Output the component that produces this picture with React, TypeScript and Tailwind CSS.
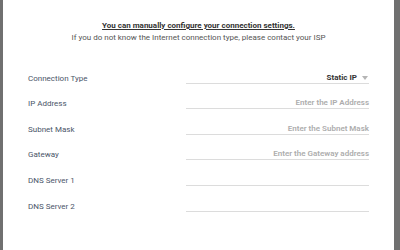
const rows = [
  { label: "Connection Type", value: "Static IP", select: true },
  { label: "IP Address", value: "Enter the IP Address" },
  { label: "Subnet Mask", value: "Enter the Subnet Mask" },
  { label: "Gateway", value: "Enter the Gateway address" },
  { label: "DNS Server 1", value: "" },
  { label: "DNS Server 2", value: "" },
];

function FieldRow({ label, value, select }: { label: string; value: string; select?: boolean }) {
  return (
    <div className="flex h-[25.6px] items-end">
      <div className="w-[158px] text-[8px] leading-[10px] text-[#4a5568]">{label}</div>
      <div className="flex h-full flex-1 items-end justify-end border-b border-[#dcdcdc]">
        {select ? (
          <div className="flex items-center gap-[5px]">
            <span className="text-[8px] font-bold leading-[10px] text-[#333]">{value}</span>
            <svg width="6" height="4" viewBox="0 0 6 4" className="mr-[1px]">
              <path d="M0 0h6L3 4z" fill="#b5b5b5" />
            </svg>
          </div>
        ) : (
          <span className="text-[8px] font-semibold leading-[10px] text-[#adadad]">{value}</span>
        )}
      </div>
    </div>
  );
}

export default function App() {
  return (
    <div className="flex h-[250px] w-[400px] bg-[#707070] font-['Roboto',sans-serif]">
      <div className="ml-[3px] mr-[6px] flex flex-1 flex-col bg-white px-[25px]">
        <div className="pt-[20px] text-center">
          <p className="text-[8px] font-bold leading-[12px] text-[#333] underline">
            You can manually configure your connection settings.
          </p>
          <p className="text-[8px] leading-[12px] text-[#555]">
            If you do not know the Internet connection type, please contact your ISP
          </p>
        </div>
        <div className="mt-[14px] flex flex-col">
          {rows.map((r) => (
            <FieldRow key={r.label} {...r} />
          ))}
        </div>
      </div>
    </div>
  );
}
